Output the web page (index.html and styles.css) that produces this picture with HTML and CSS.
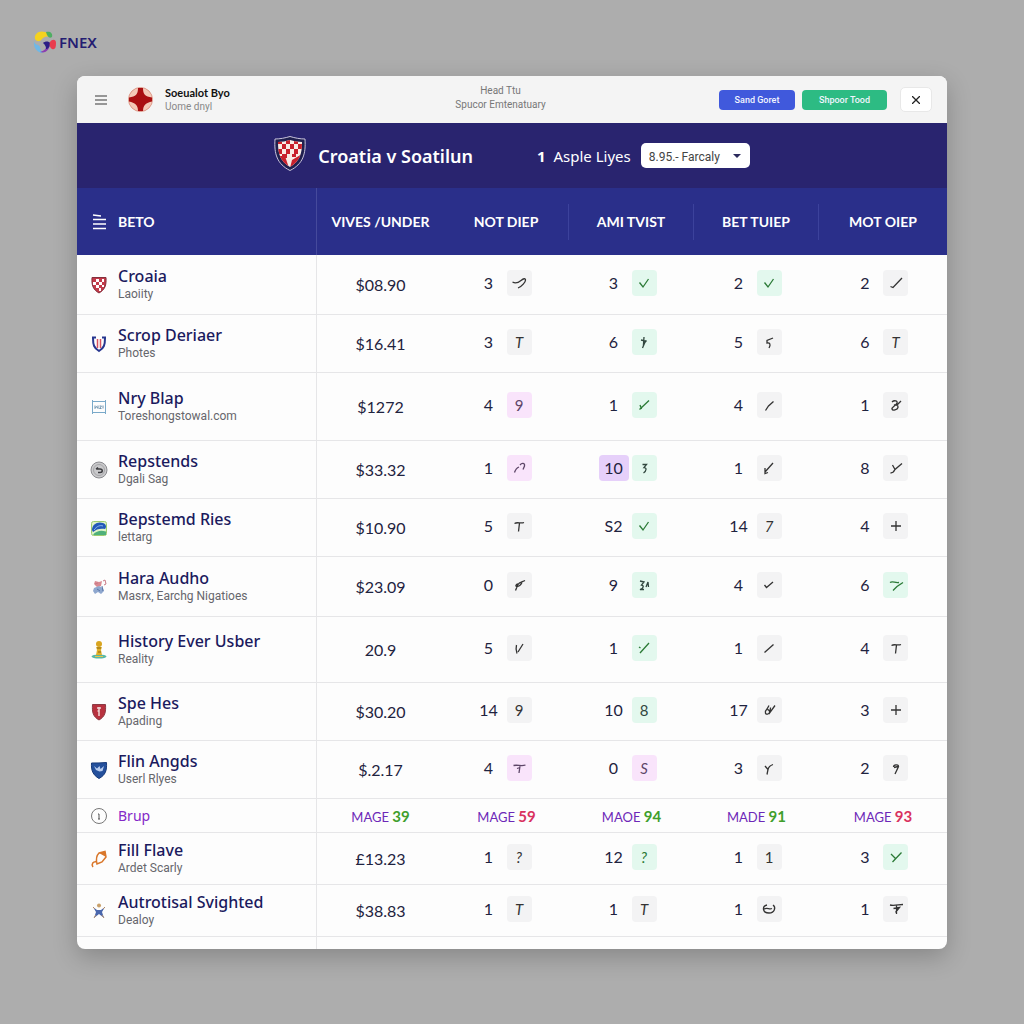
FILE: index.html
```html
<!DOCTYPE html>
<html lang="en">
<head>
<meta charset="utf-8">
<meta name="viewport" content="width=device-width, initial-scale=1">
<title>Croatia v Soatilun</title>
<link rel="stylesheet" href="styles.css">
</head>
<body>
<svg class="defs" aria-hidden="true">
  <symbol id="check" viewBox="0 0 24 24"><path d="M7.500 11.500l3.500 4.500 5.500-8"/></symbol>
  <symbol id="tick" viewBox="0 0 24 24"><path d="M6.500 15.500l2.500 1 9-9.500"/></symbol>
  <symbol id="tick-low" viewBox="0 0 24 24"><path d="M7.500 12l2 2.500 6.500-5.500"/></symbol>
  <symbol id="slash" viewBox="0 0 24 24"><path d="M7.500 16.500l9-8"/></symbol>
  <symbol id="slash-bent" viewBox="0 0 24 24"><path d="M8.500 17.500l3-4.500 5-4.500"/></symbol>
  <symbol id="slash-dot" viewBox="0 0 24 24"><path d="M8 17l9-10M7 11l1.500 1"/></symbol>
  <symbol id="slash-check" viewBox="0 0 24 24"><path d="M7.500 16.500l9.500-9M8 12l1.500 4"/></symbol>
  <symbol id="plus" viewBox="0 0 24 24"><path d="M12 7v10M7 12h10"/></symbol>
  <symbol id="swoosh" viewBox="0 0 24 24"><path d="M5.500 11c2.500 1.500 6 .5 8.500-1.500s4.500-2.500 4.500-.5-3.500 6.500-7.500 8"/></symbol>
  <symbol id="arc" viewBox="0 0 24 24"><path d="M7.500 16.500c1-3 3-5 4.500-5.500M13 9c2-2.500 5-2 4.500 1l-1.500 3.500"/></symbol>
  <symbol id="arrow" viewBox="0 0 24 24"><path d="M16 7l-8 9M8 12v5.500l3-1"/></symbol>
  <symbol id="flag" viewBox="0 0 24 24"><path d="M9 10l4.500 1-3 7M12 7l-.5 7 3-3.500"/></symbol>
  <symbol id="hook" viewBox="0 0 24 24"><path d="M10.500 8.500h4l-2.500 3c3 0 2.500 3.500-.5 5.500"/></symbol>
  <symbol id="five" viewBox="0 0 24 24"><path d="M16 8l-6 2.500v2.500c3-.5 4 1.500 2 5"/></symbol>
  <symbol id="knot" viewBox="0 0 24 24"><path d="M8 9c2-2 6-1.500 5 1s-5.500 4-5 6 5.500 1 6-1.500-2-3-4-2.500M17 8l-4 4"/></symbol>
  <symbol id="branch" viewBox="0 0 24 24"><path d="M8.500 9l2.500 4.500M18 7.500l-7 6c-1 2-2 3.500-4.500 3.500"/></symbol>
  <symbol id="loop" viewBox="0 0 24 24"><path d="M8.500 17.500l2.500-6c1-2 4-2.500 7-4M11 11c-2 0-3 2.500-1 2.500s4-2 5-4"/></symbol>
  <symbol id="marks" viewBox="0 0 24 24"><path d="M8 8l4 1-2.500 3c2.500.5 2.500 3-1.500 4.500h4M14 14l2-5 .5 5"/></symbol>
  <symbol id="wave" viewBox="0 0 24 24"><path d="M6 9.500c3-2 5 1 9 0M9 17.500l4-4 6-4"/></symbol>
  <symbol id="vee" viewBox="0 0 24 24"><path d="M9.500 9c-1 4-.5 6 .5 8.500M16 8l-5 8"/></symbol>
  <symbol id="coil" viewBox="0 0 24 24"><path d="M12 7.500l-2 3.500c-3 3-1.500 6 1 5s2-4-.5-4.500M13.500 9.500l-.5 5 5-7"/></symbol>
  <symbol id="sprig" viewBox="0 0 24 24"><path d="M8 10l3 3.500-1 5M16 8.500c-3 1-4.500 3-5 5"/></symbol>
  <symbol id="nine" viewBox="0 0 24 24"><path d="M9.500 11c0-2.500 5-3 5-.5L11 18M10 11.500l4-1"/></symbol>
  <symbol id="wye" viewBox="0 0 24 24"><path d="M7 9l4.500 4.500M17.500 7.500l-9 9.500"/></symbol>
  <symbol id="smile" viewBox="0 0 24 24"><path d="M10 8c-5 1-5 8 2 8 6 0 7-6 4-8M7 12c4-2 5 1 8-.5"/></symbol>
  <symbol id="mast" viewBox="0 0 24 24"><path d="M6 8c4 1 9-.5 13-.5M12.500 8v9M9.500 11.500l6-1-4 5"/></symbol>
  <symbol id="tee" viewBox="0 0 24 24"><path d="M7.500 9.500c3-2 6 .5 9.500-1M12.500 9l-1 8.500"/></symbol>
  <symbol id="tee-bar" viewBox="0 0 24 24"><path d="M6.500 9.500c4-1 8 1 12-.5M13 10l-1 7M10 12.500l3-1"/></symbol>
</svg>

<header class="site">
  <a class="brand" href="#">
    <svg width="27" height="24" viewBox="0 0 27 24" aria-hidden="true">
      <path fill="#f5d21f" d="M3 9C2 4 7 0 13 2c4 1 5 3 4 5-3-1-5 0-7 2-2 3-5 3-7 0z"/>
      <path fill="#4fae62" d="M14 2c4-1 7 1 6 5-3 2-5-1-6-5z"/>
      <path fill="#6fb8e6" d="M2 11c1 5 5 3 6 6 0 2 1 4 3 6-6 0-10-6-9-12z"/>
      <path fill="#8a3fb0" d="M8 22c4-1 6-3 7-6l3-3c0 6-4 11-10 9z"/>
      <path fill="#2c1f86" d="M11 13c2-2 6-2 7 0 0 4-2 6-4 6 0-3-1-4-3-6z"/>
      <path fill="#e93c4e" d="M18 12c2-3 6-3 6 1 0 5-1 7-4 6-2-1-3-4-2-7z"/>
    </svg>
    <span>FNEX</span>
  </a>
</header>

<main class="card">
  <div class="topbar">
    <div class="account">
      <button class="menu" type="button" aria-label="Menu">
        <svg width="12" height="12" viewBox="0 0 12 12"><path d="M0 2h12M0 6h12M0 10h12" stroke="#777" stroke-width="1.500"/></svg>
      </button>
      <svg class="avatar" width="25" height="25" viewBox="0 0 25 25" aria-hidden="true">
        <circle cx="12.500" cy="12.500" r="12" fill="#f4c9b8" stroke="#dd9a8a"/>
        <path fill="#a90f12" d="M10 1h5c0 6 2 8.500 9 9.500v4c-6 1-9 4-9 9.500h-5c0-5.500-3-8.500-9-9.500v-4C8 9.500 10 7 10 1z"/>
      </svg>
      <div class="who">
        <strong>Soeualot Byo</strong>
        <span>Uome dnyl</span>
      </div>
    </div>
    <div class="heading"><span>Head Ttu</span><span>Spucor Emtenatuary</span></div>
    <div class="actions">
      <button class="btn blue" type="button">Sand Goret</button>
      <button class="btn green" type="button">Shpoor Tood</button>
      <button class="close" type="button" aria-label="Close">
        <svg width="8" height="8" viewBox="0 0 8 8"><path d="M0 0l8 8M8 0L0 8" stroke="#222" stroke-width="1.300"/></svg>
      </button>
    </div>
  </div>

  <div class="banner">
    <svg class="crest" width="32" height="35" viewBox="0 0 32 35" aria-hidden="true">
      <path d="M1 3c5 0 10-1 15-2.500C21 2 26 3 31 3c1 15-2 25-15 31.500C3 28 0 18 1 3z" fill="#20204f" stroke="#c9c4dc"/>
      <clipPath id="crest-clip"><path d="M4 6c4 0 8-1 12-2 4 1 8 2 12 2 0 12-2 19-12 25C6 25 4 18 4 6z"/></clipPath>
      <g clip-path="url(#crest-clip)">
        <path fill="#f8ece6" d="M4 3h24v29H4z"/>
        <path fill="#c8202c" d="M4 3h4v5H4zM12 3h4v5h-4zM20 3h4v5h-4zM8 8h4v5H8zM16 8h4v5h-4zM24 8h4v5h-4zM4 13h4v5H4zM12 13h4v5h-4zM20 13h4v5h-4zM8 18h5v4H8zM18 18h4v3h-4zM4 20h7l4 12H4zM18 24l10-6v14H16z"/>
      </g>
    </svg>
    <h1>Croatia v Soatilun</h1>
    <label for="filter"><b>1</b> Asple Liyes</label>
    <span class="picker">
      <select id="filter"><option>8.95.- Farcaly</option></select>
      <svg width="10" height="6" viewBox="0 0 10 6" aria-hidden="true"><path d="M1 1l4 4 4-4z" fill="#2b2a5c"/></svg>
    </span>
  </div>

  <table>
    <colgroup><col class="c-name"><col class="c-price"><col class="c-mark"><col class="c-mark"><col class="c-mark"><col class="c-last"></colgroup>
    <thead>
      <tr>
        <th scope="col"><div class="entry">
          <svg width="18" height="18" viewBox="0 0 18 18" aria-hidden="true"><path d="M3 2l8 1M3 6.500h13M3 11h13M3 15.500h13" stroke="#fff" stroke-width="1.500"/></svg>
          <span>BETO</span></div></th>
        <th scope="col">VIVES /UNDER</th>
        <th scope="col"><div class="sep">NOT DIEP</div></th>
        <th scope="col"><div class="sep">AMI TVIST</div></th>
        <th scope="col"><div class="sep">BET TUIEP</div></th>
        <th scope="col">MOT OIEP</th>
      </tr>
    </thead>
    <tbody>
      <tr class="h60">
        <td><div class="entry">
          <svg width="18" height="18" viewBox="0 0 18 18"><path d="M2 1.500h14c.5 8-1 12-7 15.500C3 13.500 1.500 9.500 2 1.500z" fill="#c23a4a" stroke="#84303d"/><path fill="#fff" d="M6 3h3v3H6zM12 3h2v3h-2zM3 6h3v3H3zM9 6h3v3H9zM6 9h3v3H6zM12 9h2v2h-2zM9 12h2v3H9z"/></svg>
          <div class="names"><b>Croaia</b><span>Laoiity</span></div></div></td>
        <td class="price">$08.90</td>
        <td><div class="pair"><span class="num">3</span><span class="chip"><svg><use href="#swoosh"/></svg></span></div></td>
        <td><div class="pair"><span class="num">3</span><span class="chip ok"><svg><use href="#check"/></svg></span></div></td>
        <td><div class="pair"><span class="num">2</span><span class="chip ok"><svg><use href="#check"/></svg></span></div></td>
        <td><div class="pair"><span class="num">2</span><span class="chip"><svg><use href="#tick"/></svg></span></div></td>
      </tr>
      <tr class="h58">
        <td><div class="entry">
          <svg width="18" height="18" viewBox="0 0 18 18"><path d="M3 3c0 7 1 10 6 13 5-3 6-6 6-13" fill="none" stroke="#27368f" stroke-width="2"/><path d="M2 2.500h4M12 2.500h4" stroke="#27368f" stroke-width="2"/><path d="M7.500 4v9M10.500 4v9" stroke="#d8505e" stroke-width="1.500"/></svg>
          <div class="names"><b>Scrop Deriaer</b><span>Photes</span></div></div></td>
        <td class="price">$16.41</td>
        <td><div class="pair"><span class="num">3</span><span class="chip"><i>T</i></span></div></td>
        <td><div class="pair"><span class="num">6</span><span class="chip ok dark"><svg><use href="#flag"/></svg></span></div></td>
        <td><div class="pair"><span class="num">5</span><span class="chip"><svg><use href="#five"/></svg></span></div></td>
        <td><div class="pair"><span class="num">6</span><span class="chip"><i>T</i></span></div></td>
      </tr>
      <tr class="h68">
        <td><div class="entry">
          <svg width="18" height="18" viewBox="0 0 18 18"><path d="M2.500 2v14M15.500 2v14M2.500 3.500h13M2.500 14.500h13" fill="none" stroke="#79a9c9"/><path d="M5 7.500v3l1.500-2L8 10.500v-3M9.500 8h2l-2 2.500h2M13 7.500v3" fill="none" stroke="#6f94b0"/></svg>
          <div class="names"><b>Nry Blap</b><span>Toreshongstowal.com</span></div></div></td>
        <td class="price">$1272</td>
        <td><div class="pair"><span class="num">4</span><span class="chip pink">9</span></div></td>
        <td><div class="pair"><span class="num">1</span><span class="chip ok"><svg><use href="#slash-check"/></svg></span></div></td>
        <td><div class="pair"><span class="num">4</span><span class="chip"><svg><use href="#slash-bent"/></svg></span></div></td>
        <td><div class="pair"><span class="num">1</span><span class="chip"><svg><use href="#knot"/></svg></span></div></td>
      </tr>
      <tr class="h58">
        <td><div class="entry">
          <svg width="18" height="18" viewBox="0 0 18 18"><circle cx="9" cy="9" r="8" fill="#c9c9cb" stroke="#8c8c90"/><circle cx="9" cy="9" r="5.500" fill="none" stroke="#a5a5a8"/><path d="M6 8h4c3 0 3 3.500 0 3.500H8M6 8l2-1.500" fill="none" stroke="#3c3c40" stroke-width="1.500"/></svg>
          <div class="names"><b>Repstends</b><span>Dgali Sag</span></div></div></td>
        <td class="price">$33.32</td>
        <td><div class="pair"><span class="num">1</span><span class="chip pink"><svg><use href="#arc"/></svg></span></div></td>
        <td><div class="pair"><span class="num hot">10</span><span class="chip ok dark"><svg><use href="#hook"/></svg></span></div></td>
        <td><div class="pair"><span class="num">1</span><span class="chip"><svg><use href="#arrow"/></svg></span></div></td>
        <td><div class="pair"><span class="num">8</span><span class="chip"><svg><use href="#branch"/></svg></span></div></td>
      </tr>
      <tr class="h58">
        <td><div class="entry">
          <svg width="18" height="18" viewBox="0 0 18 18"><rect x="1.500" y="2.500" width="15" height="14" rx="2" fill="#dff2c8" stroke="#9ccc70"/><path d="M2 11C2 5 8 2 13 4c3 1 4 4 2 6-4-1-9 0-12 3z" fill="#2358b8"/><path d="M4 11c3-4 6-5 9-4" fill="none" stroke="#8fb9ee"/><path d="M3 15.500c4-4 8-4.500 13-3v3.500H4z" fill="#4fb07a"/></svg>
          <div class="names"><b>Bepstemd Ries</b><span>lettarg</span></div></div></td>
        <td class="price">$10.90</td>
        <td><div class="pair"><span class="num">5</span><span class="chip"><svg><use href="#tee"/></svg></span></div></td>
        <td><div class="pair"><span class="num">S2</span><span class="chip ok"><svg><use href="#check"/></svg></span></div></td>
        <td><div class="pair"><span class="num">14</span><span class="chip"><i>7</i></span></div></td>
        <td><div class="pair"><span class="num">4</span><span class="chip"><svg><use href="#plus"/></svg></span></div></td>
      </tr>
      <tr class="h60">
        <td><div class="entry">
          <svg width="18" height="18" viewBox="0 0 18 18"><path d="M5 3l4 1 3-1-1 5-4 1-3-3z" fill="#d98a92"/><path d="M13 3l2-1 1 4-2 1M5 6l3-1" fill="none" stroke="#c97a86"/><path d="M4 10l5-2 4 2 1 3-3 3-3-2-3 2-2-3z" fill="#8fa8cf"/><path d="M7 11l3 2M12 8l1 5" stroke="#5b76a8"/></svg>
          <div class="names"><b>Hara Audho</b><span>Masrx, Earchg Nigatioes</span></div></div></td>
        <td class="price">$23.09</td>
        <td><div class="pair"><span class="num">0</span><span class="chip"><svg><use href="#loop"/></svg></span></div></td>
        <td><div class="pair"><span class="num">9</span><span class="chip ok dark"><svg><use href="#marks"/></svg></span></div></td>
        <td><div class="pair"><span class="num">4</span><span class="chip"><svg><use href="#tick-low"/></svg></span></div></td>
        <td><div class="pair"><span class="num">6</span><span class="chip ok"><svg><use href="#wave"/></svg></span></div></td>
      </tr>
      <tr class="h66">
        <td><div class="entry">
          <svg width="18" height="18" viewBox="0 0 18 18"><ellipse cx="9" cy="15.500" rx="7.500" ry="2" fill="#58b8a6"/><circle cx="9" cy="3" r="3" fill="#d9a520"/><path d="M6 6h6l-1 3 1 5H6l1-5z" fill="#e0b02a"/><path d="M7 7h4M8 11h3" stroke="#8a6512"/><path d="M5 15.500h8" stroke="#e8c54a"/></svg>
          <div class="names"><b>History Ever Usber</b><span>Reality</span></div></div></td>
        <td class="price">20.9</td>
        <td><div class="pair"><span class="num">5</span><span class="chip"><svg><use href="#vee"/></svg></span></div></td>
        <td><div class="pair"><span class="num">1</span><span class="chip ok"><svg><use href="#slash-dot"/></svg></span></div></td>
        <td><div class="pair"><span class="num">1</span><span class="chip"><svg><use href="#slash"/></svg></span></div></td>
        <td><div class="pair"><span class="num">4</span><span class="chip"><svg><use href="#tee"/></svg></span></div></td>
      </tr>
      <tr class="h58">
        <td><div class="entry">
          <svg width="18" height="18" viewBox="0 0 18 18"><path d="M2.500 1.500h13c.5 8-.5 12-6.500 15.500C3 13.500 2 9.500 2.500 1.500z" fill="#b8323f" stroke="#8c3a44"/><path d="M7 5h4M9 4v9M7.500 8H9" stroke="#f0d5d5" stroke-width="1.500"/></svg>
          <div class="names"><b>Spe Hes</b><span>Apading</span></div></div></td>
        <td class="price">$30.20</td>
        <td><div class="pair"><span class="num">14</span><span class="chip">9</span></div></td>
        <td><div class="pair"><span class="num">10</span><span class="chip ok dark">8</span></div></td>
        <td><div class="pair"><span class="num">17</span><span class="chip"><svg><use href="#coil"/></svg></span></div></td>
        <td><div class="pair"><span class="num">3</span><span class="chip"><svg><use href="#plus"/></svg></span></div></td>
      </tr>
      <tr class="h58">
        <td><div class="entry">
          <svg width="18" height="18" viewBox="0 0 18 18"><path d="M1.500 2c5 0 10 0 15-.5.5 8-1 12.500-7.500 16C3 14 1 9.500 1.500 2z" fill="#24509c" stroke="#173a7a"/><path d="M4 5l3 2.500L9.500 5l1 3L14 5l-1.500 5-3 .5L6 9zM7 13l3-1" fill="#b9cdf0"/></svg>
          <div class="names"><b>Flin Angds</b><span>Userl Rlyes</span></div></div></td>
        <td class="price">$.2.17</td>
        <td><div class="pair"><span class="num">4</span><span class="chip pink"><svg><use href="#tee-bar"/></svg></span></div></td>
        <td><div class="pair"><span class="num">0</span><span class="chip pink"><i>S</i></span></div></td>
        <td><div class="pair"><span class="num">3</span><span class="chip"><svg><use href="#sprig"/></svg></span></div></td>
        <td><div class="pair"><span class="num">2</span><span class="chip"><svg><use href="#nine"/></svg></span></div></td>
      </tr>
      <tr class="h34 totals">
        <td><div class="entry">
          <svg width="18" height="18" viewBox="0 0 18 18"><circle cx="9" cy="9" r="7.500" fill="none" stroke="#777"/><path d="M8 7h1v5M8 12h2" fill="none" stroke="#555"/></svg>
          <span>Brup</span></div></td>
        <td>MAGE <b class="up">39</b></td>
        <td>MAGE <b class="down">59</b></td>
        <td>MAOE <b class="up">94</b></td>
        <td>MADE <b class="up">91</b></td>
        <td>MAGE <b class="down">93</b></td>
      </tr>
      <tr class="h52">
        <td><div class="entry">
          <svg width="18" height="18" viewBox="0 0 18 18"><path d="M9 3l6-1.500 1 5.500-4 5-5 2c-1-4-1-8 2-11zM7 12c-4-1-6 2-4 5" fill="none" stroke="#d9772b" stroke-width="1.500"/><path d="M9 3l6-1.500 1 5.500z" fill="#d9772b"/></svg>
          <div class="names"><b>Fill Flave</b><span>Ardet Scarly</span></div></div></td>
        <td class="price">£13.23</td>
        <td><div class="pair"><span class="num">1</span><span class="chip"><i>?</i></span></div></td>
        <td><div class="pair"><span class="num">12</span><span class="chip ok"><i>?</i></span></div></td>
        <td><div class="pair"><span class="num">1</span><span class="chip">1</span></div></td>
        <td><div class="pair"><span class="num">3</span><span class="chip ok"><svg><use href="#wye"/></svg></span></div></td>
      </tr>
      <tr class="h52">
        <td><div class="entry">
          <svg width="18" height="18" viewBox="0 0 18 18"><circle cx="9" cy="3.500" r="2" fill="#c9a06a"/><path d="M3 5l4 3h4l4-3-3 5 2 6-5-4-5 4 2-6z" fill="#4a67ad"/><path d="M3 5l2 2M15 5l-2 2M4 16l2-3M14 16l-2-3" stroke="#b08a6a"/></svg>
          <div class="names"><b>Autrotisal Svighted</b><span>Dealoy</span></div></div></td>
        <td class="price">$38.83</td>
        <td><div class="pair"><span class="num">1</span><span class="chip"><i>T</i></span></div></td>
        <td><div class="pair"><span class="num">1</span><span class="chip"><i>T</i></span></div></td>
        <td><div class="pair"><span class="num">1</span><span class="chip"><svg><use href="#smile"/></svg></span></div></td>
        <td><div class="pair"><span class="num">1</span><span class="chip"><svg><use href="#mast"/></svg></span></div></td>
      </tr>
      <tr class="h12"><td></td><td></td><td></td><td></td><td></td><td></td></tr>
    </tbody>
  </table>
</main>
</body>
</html>
```
FILE: styles.css
```css
* { box-sizing: border-box; }

body {
  margin: 0;
  min-height: 100vh;
  padding: 0 77px 75px;
  background: #adadad;
  color: #1f2340;
  font-family: Lato, "Noto Sans", sans-serif;
  font-size: 16px;
}

svg { display: block; flex: none; }
.defs { position: absolute; width: 0; height: 0; }
button { border: 0; padding: 0; font-family: inherit; }

.site { height: 76px; padding-top: 30px; margin-left: -45px; }
.brand {
  display: flex;
  align-items: center;
  width: max-content;
  color: #251d72;
  font: 600 15px/24px "Noto Sans", sans-serif;
  text-decoration: none;
}

.card {
  overflow: hidden;
  border-radius: 8px;
  background: #fdfdfd;
  box-shadow: 0 8px 24px rgba(0, 0, 0, .22);
}

/* Top bar */
.topbar {
  display: grid;
  grid-template-columns: 1fr auto 1fr;
  align-items: center;
  height: 47px;
  padding: 0 15px 0 18px;
  background: #f4f4f4;
}
.account { display: flex; align-items: center; }
.menu { background: none; margin-right: 21px; }
.avatar { margin-right: 12px; }
.who { display: grid; font: 10px/14px Roboto, sans-serif; }
.who strong { color: #111; font: 700 11px/14px Lato, sans-serif; }
.who span { color: #888; }
.heading {
  display: grid;
  margin-right: 26px;
  padding-bottom: 4px;
  color: #777;
  font: 10px/14px Roboto, sans-serif;
  text-align: center;
}
.actions { display: flex; align-items: center; justify-content: flex-end; gap: 7px; }
.btn {
  height: 20px;
  border-radius: 4px;
  color: #f2f5ff;
  font: 500 9px/20px Roboto, sans-serif;
}
.blue { width: 76px; background: #4059dc; }
.green { width: 85px; background: #2dbb83; }
.close {
  display: grid;
  place-items: center;
  width: 32px;
  height: 25px;
  margin-left: 6px;
  border: 1px solid #e8e8e8;
  border-radius: 5px;
  background: #fff;
}

/* Match banner */
.banner {
  display: flex;
  align-items: center;
  justify-content: center;
  height: 65px;
  background: #29246f;
  color: #fff;
}
.crest { margin: -4px 12px 0 0; }
.banner h1 { margin: 0 64px 0 0; font: 600 18px/24px "Noto Sans", sans-serif; }
.banner label { margin-right: 10px; font: 15px/20px "Noto Sans", sans-serif; }
.banner label b { margin-right: 4px; }
.picker { display: grid; align-items: center; }
.picker select, .picker svg { grid-area: 1 / 1; }
.picker svg { justify-self: end; margin-right: 8px; pointer-events: none; }
.picker select {
  appearance: none;
  width: 109px;
  height: 25px;
  padding: 2px 8px 0;
  border: 0;
  border-radius: 5px;
  background: #fff;
  color: #444;
  font: 12px/20px Roboto, sans-serif;
}

/* Odds table */
table { width: 100%; table-layout: fixed; border-spacing: 0; }
.c-name { width: 240px; }
.c-price { width: 127px; }
.c-mark { width: 125px; }
.c-last { width: 128px; }

th, td { padding: 0; text-align: center; vertical-align: middle; }
th {
  height: 67px;
  background: #2a2f8a;
  color: #fff;
  font: 700 14px/20px Lato, sans-serif;
}
th:first-child { border-right: 1px solid #454a9c; }
td { border-bottom: 1px solid #e6e6e8; }
td:first-child { border-right: 1px solid #e6e6e8; }
.sep { padding: 8px 0; border-right: 1px solid #3c429c; }

.h60 { height: 60px; }
.h58 { height: 58px; }
.h68 { height: 68px; }
.h66 { height: 66px; }
.h52 { height: 52px; }
.h34 { height: 34px; }
.h12 { height: 12px; }
.h12 td { border-bottom: 0; }

.entry { display: flex; align-items: center; gap: 10px; padding-left: 13px; text-align: left; }
.names { display: grid; }
.names b { color: #1b1a5e; font: 500 16px/20px "Noto Sans", sans-serif; }
.names span { color: #66666c; font: 12px/17px Roboto, sans-serif; }

.price { font-size: 16px; }
.pair { display: flex; align-items: center; justify-content: center; gap: 3px; padding: 0 8px 3px 0; }
.num { width: 30px; font-size: 16px; line-height: 26px; }
.hot { border-radius: 4px; background: #e6d0fa; }
.chip {
  display: grid;
  place-items: center;
  width: 25px;
  height: 26px;
  border-radius: 4px;
  background: #f3f3f4;
  color: #333;
  font-size: 15px;
  line-height: 26px;
}
.chip svg {
  width: 24px;
  height: 24px;
  fill: none;
  stroke: currentColor;
  stroke-width: 1.3;
}
.chip.ok { background: #e3f8ee; color: #2b7a36; }
.chip.ok.dark { color: #31473f; }
.chip.pink { background: #f9e4fb; color: #5d4668; }

.totals { color: #6d28b8; font-size: 13px; }
.totals .entry { color: #8428c8; font: 14px/20px "Noto Sans", sans-serif; }
.totals b { font-size: 15px; }
.up { color: #3f9f2c; }
.down { color: #d9315f; }
```
